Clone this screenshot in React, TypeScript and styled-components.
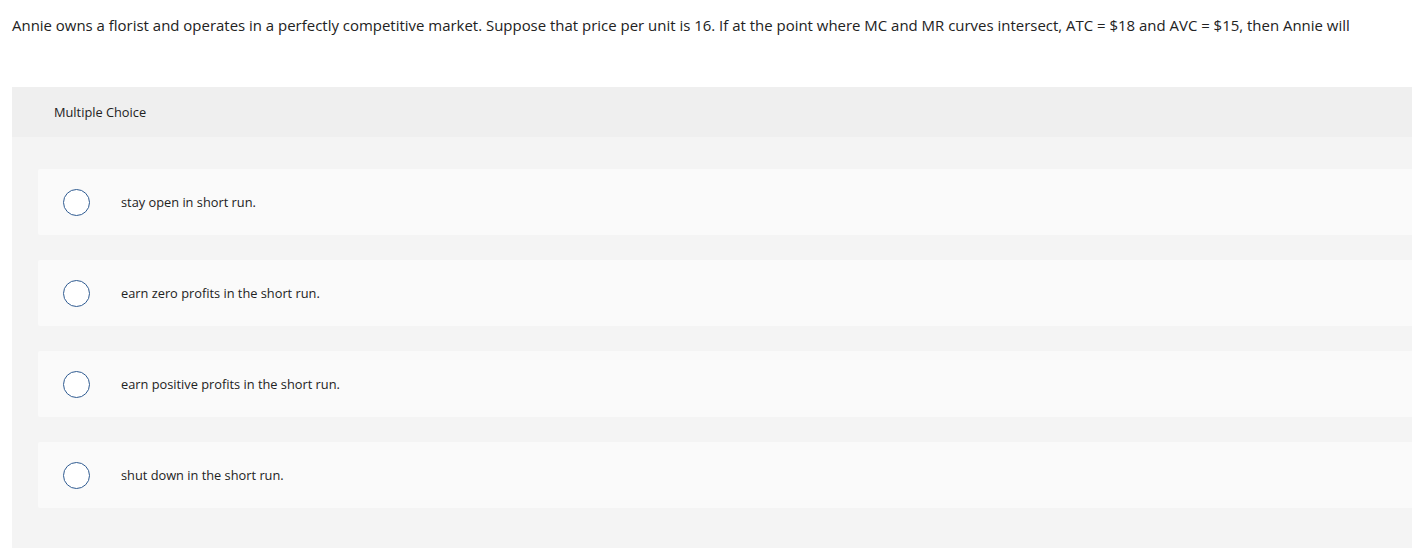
import React from "react";
import styled, { createGlobalStyle } from "styled-components";

const Global = createGlobalStyle`
  html, body { margin: 0; padding: 0; background: #fff; }
  body { font-family: "Open Sans", "Liberation Sans", Arial, sans-serif; color: #222; }
`;

const Page = styled.div`
  padding: 15px 0 0 12px;
`;

const Question = styled.p`
  margin: 0;
  font-size: 14.96px;
  line-height: 20px;
  color: #222;
  white-space: nowrap;
`;

const Panel = styled.section`
  margin-top: 52px;
  background: #f4f4f4;
  padding-bottom: 40px;
`;

const Header = styled.div`
  height: 50px;
  display: flex;
  align-items: center;
  padding-left: 42px;
  background: #efefef;
  font-size: 12.8px;
  color: #222;
`;

const Options = styled.div`
  display: flex;
  flex-direction: column;
  gap: 25px;
  padding: 32px 0 0 26px;
`;

const Option = styled.label`
  height: 66px;
  display: flex;
  align-items: center;
  background: #fafafa;
  padding-left: 25px;
  border-radius: 2px 0 0 2px;
  cursor: pointer;
`;

const Radio = styled.span`
  width: 25px;
  height: 25px;
  border-radius: 50%;
  border: 1.5px solid #2f5b91;
  background: #fff;
  flex: none;
`;

const OptionText = styled.span`
  margin-left: 31px;
  font-size: 12.8px;
  color: #222;
`;

const choices = [
  "stay open in short run.",
  "earn zero profits in the short run.",
  "earn positive profits in the short run.",
  "shut down in the short run.",
];

export default function App() {
  return (
    <>
      <Global />
      <Page>
        <Question>
          Annie owns a florist and operates in a perfectly competitive market. Suppose that price per unit is 16. If at the point where MC and MR curves intersect, ATC = $18 and AVC = $15, then Annie will
        </Question>
        <Panel>
          <Header>Multiple Choice</Header>
          <Options>
            {choices.map((c) => (
              <Option key={c}>
                <Radio />
                <OptionText>{c}</OptionText>
              </Option>
            ))}
          </Options>
        </Panel>
      </Page>
    </>
  );
}
